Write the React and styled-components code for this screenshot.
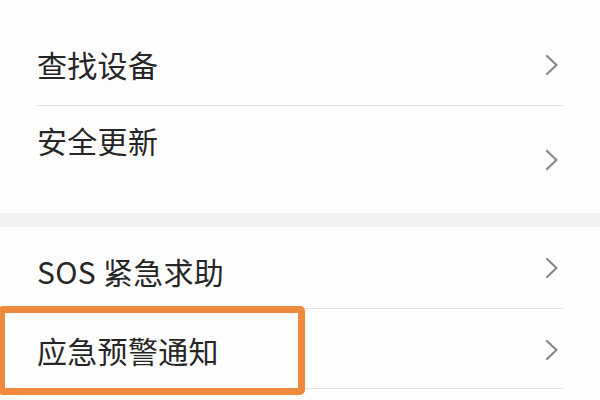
import { createGlobalStyle, styled } from "styled-components";

const GlobalStyle = createGlobalStyle`
  html, body {
    margin: 0;
    padding: 0;
    background: #fdfdfd;
  }
  body {
    font-family: "Noto Sans CJK SC", "Noto Sans", sans-serif;
    -webkit-font-smoothing: antialiased;
  }
`;

const Screen = styled.div`
  width: 600px;
  height: 400px;
  overflow: hidden;
  background: #fdfdfd;
  display: flex;
  flex-direction: column;
`;

const Group = styled.section`
  position: relative;
  background: #fdfdfd;
  display: flex;
  flex-direction: column;
  padding-top: ${(p) => p.$top || 0}px;
`;

const Gap = styled.div`
  height: 14px;
  background: #f2f2f2;
  flex-shrink: 0;
`;

const Row = styled.div`
  margin: 0 37px 0 37px;
  height: ${(p) => p.$height}px;
  display: flex;
  align-items: center;
  justify-content: space-between;
  border-bottom: ${(p) => (p.$divider ? "1px solid #e2e2e2" : "none")};
  box-sizing: content-box;
`;

const Label = styled.span`
  font-size: 30px;
  font-weight: 400;
  line-height: 36px;
  color: #262626;
  letter-spacing: 0.3px;
  margin-bottom: ${(p) => p.$shift || 0}px;
  margin-top: ${(p) => p.$drop || 0}px;
`;

const Chevron = styled.svg`
  width: 14px;
  height: 22px;
  margin-right: 4px;
  margin-top: ${(p) => p.$drop || 0}px;
  flex-shrink: 0;
`;

const Highlight = styled.div`
  position: absolute;
  left: -2px;
  top: 79px;
  width: 307px;
  height: 89px;
  box-sizing: border-box;
  border: 7px solid #ef893b;
  border-radius: 5px;
  pointer-events: none;
`;

const Arrow = ({ drop }) => (
  <Chevron viewBox="0 0 14 22" $drop={drop}>
    <path
      d="M2 2 L11.5 11 L2 20"
      fill="none"
      stroke="#888888"
      strokeWidth="2.2"
      strokeLinecap="round"
      strokeLinejoin="round"
    />
  </Chevron>
);

const App = () => {
  return (
    <>
      <GlobalStyle />
      <Screen>
        <Group $top={28}>
          <Row $height={77} $divider>
            <Label $shift={6}>查找设备</Label>
            <Arrow drop={-4} />
          </Row>
          <Row $height={107}>
            <Label $shift={40}>安全更新</Label>
            <Arrow />
          </Row>
        </Group>
        <Gap />
        <Group>
          <Row $height={81} $divider>
            <Label $drop={6}>SOS 紧急求助</Label>
            <Arrow />
          </Row>
          <Row $height={79} $divider>
            <Label $drop={2}>应急预警通知</Label>
            <Arrow drop={2} />
          </Row>
          <Highlight />
        </Group>
      </Screen>
    </>
  );
};

export default App;
